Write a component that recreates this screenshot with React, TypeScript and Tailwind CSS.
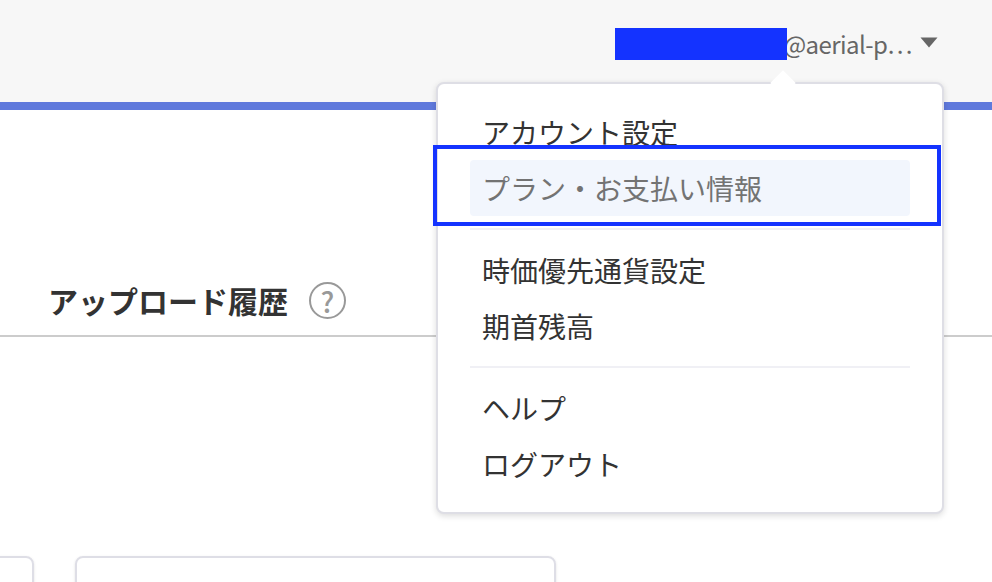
const items = ['アカウント設定', 'プラン・お支払い情報']
const settings = ['時価優先通貨設定', '期首残高']
const support = ['ヘルプ', 'ログアウト']

function MenuItem({ label, active }: { label: string; active?: boolean }) {
    return (
        <div className={active ? 'flex h-14 items-center rounded-sm bg-[#f2f6fd] px-3 text-[#737373]' : 'flex h-14 items-center px-3 text-[#333333]'}>
            {label}
        </div>
    )
}

function AccountMenu() {
    return (
        <div className="absolute top-[82px] left-[436px] w-[508px] rounded-lg border-2 border-[#dedee5] bg-white px-8 pt-[20px] pb-[20px] text-[28px] shadow-[0_2px_6px_rgba(0,0,0,0.14)]">
            {/* Arrow pointing at the account name */}
            <div className="absolute -top-[10px] left-[336px] h-[18px] w-[18px] rotate-45 bg-white" />

            <div className="relative">
                {items.map((label) => (
                    <MenuItem key={label} label={label} active={label === items[1]} />
                ))}
            </div>
            <div className="mt-3 h-[2px] bg-[#f0f0f5]" />

            <div className="pt-[12px] pb-[12px]">
                {settings.map((label) => (
                    <MenuItem key={label} label={label} />
                ))}
            </div>
            <div className="h-[2px] bg-[#f0f0f5]" />

            <div className="pt-3">
                {support.map((label) => (
                    <MenuItem key={label} label={label} />
                ))}
            </div>

            {/* Annotation frame round the highlighted row */}
            <div className="absolute top-[61px] left-[-5px] h-[81px] w-[508px] border-4 border-[#1433ff]" />
        </div>
    )
}

export default function App() {
    return (
        <div
            className="relative h-[582px] w-[992px] overflow-hidden bg-white"
            style={{ fontFamily: '"Noto Sans CJK JP", "Noto Sans", sans-serif' }}
        >
            <header className="flex h-[102px] items-start justify-end bg-[#f7f7f7] pt-[28px] pr-[54px]">
                <div className="relative z-10 h-8 w-[172px] bg-[#1433ff]" />
                <span className="-ml-[4px] h-8 text-[24px] leading-8 tracking-[-0.55px] whitespace-nowrap text-[#666666]">@aerial-p⋯</span>
                <svg className="mt-[9px] ml-[8px]" width="18" height="11" viewBox="0 0 18 11">
                    <path d="M0.5 0.5h17L9 10.5z" fill="#666666" />
                </svg>
            </header>
            <div className="h-2 bg-[#5f79dc]" />

            <main>
                <div className="flex h-[227px] items-end border-b-2 border-[#cccccc] pb-[13px] pl-[48px]">
                    <h2 className="text-[30px] leading-[44px] font-bold text-[#333333]">アップロード履歴</h2>
                    <span className="mb-[3px] ml-[21px] flex h-[37px] w-[37px] items-center justify-center rounded-full border-2 border-[#999999] text-[28px] font-medium text-[#999999]">
                        ?
                    </span>
                </div>
                <div className="mt-[219px] flex gap-[41px]">
                    <div className="ml-[-100px] h-[60px] w-[134px] rounded-lg border-2 border-[#dedee6] shadow-sm" />
                    <div className="h-[60px] w-[481px] rounded-lg border-2 border-[#dedee6] shadow-sm" />
                </div>
            </main>

            <AccountMenu />
        </div>
    )
}
